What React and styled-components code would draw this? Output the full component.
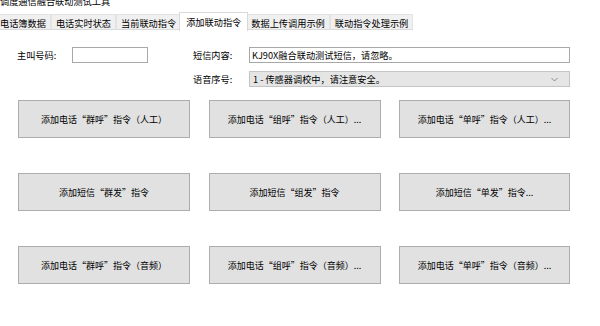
import React from 'react';
import styled, { createGlobalStyle } from 'styled-components';

const FONT = '"Noto Sans CJK SC", "Liberation Sans", sans-serif';

const GlobalStyle = createGlobalStyle`
  html, body {
    margin: 0;
    padding: 0;
    background: #fff;
  }
  body {
    font-family: ${FONT};
    color: #000;
  }
`;

const TABS = ['电话簿数据', '电话实时状态', '当前联动指令', '添加联动指令', '数据上传调用示例', '联动指令处理示例'];

const BUTTONS = [
  '添加电话“群呼”指令（人工）',
  '添加电话“组呼”指令（人工）...',
  '添加电话“单呼”指令（人工）...',
  '添加短信“群发”指令',
  '添加短信“组发”指令',
  '添加短信“单发”指令...',
  '添加电话“群呼”指令（音频）',
  '添加电话“组呼”指令（音频）...',
  '添加电话“单呼”指令（音频）...',
];

const Window = styled.div`
  width: 600px;
  height: 326px;
  overflow: hidden;
  background: #fff;
  font-size: 9.2px;
`;

const Title = styled.div`
  height: 10px;
  line-height: 10px;
  margin-top: -4px;
  padding-left: 0;
  white-space: nowrap;
`;

const TabBar = styled.div`
  display: flex;
  align-items: flex-start;
  width: 410px;
  height: 19px;
  margin-top: 6px;
`;

const Tab = styled.div`
  position: relative;
  height: ${p => (p.$active ? '19px' : '16px')};
  line-height: ${p => (p.$active ? '18px' : '16px')};
  margin-top: ${p => (p.$active ? '0' : '2px')};
  margin-left: ${p => (p.$active ? '-2px' : '0')};
  margin-right: ${p => (p.$active ? '-2px' : '0')};
  padding: ${p => (p.$active ? '0 6px' : '0 4px')};
  background: ${p => (p.$active ? '#fff' : '#f0f0f0')};
  border: 1px solid ${p => (p.$active ? '#d9d9d9' : '#e3e3e3')};
  border-bottom: ${p => (p.$active ? 'none' : '1px solid #d9d9d9')};
  box-sizing: border-box;
  white-space: nowrap;
  z-index: ${p => (p.$active ? 1 : 0)};

  &:first-child {
    padding-left: 0;
    border-left: none;
  }
`;

const Form = styled.div`
  display: flex;
  padding: 16px 0 0 17px;
`;

const Field = styled.div`
  display: flex;
  align-items: center;
  height: 16px;
  margin-bottom: 8px;
`;

const Label = styled.span`
  width: ${p => p.$w}px;
  white-space: nowrap;
`;

const LeftCol = styled.div`
  width: 176px;
`;

const RightCol = styled.div`
  display: flex;
  flex-direction: column;
`;

const TextBox = styled.div`
  width: ${p => p.$w}px;
  height: 16px;
  line-height: 14px;
  box-sizing: border-box;
  border: 1px solid #a8a8a8;
  background: #fff;
  padding-left: 2px;
  white-space: nowrap;
  overflow: hidden;
`;

const Select = styled.div`
  display: flex;
  align-items: center;
  justify-content: space-between;
  width: 321px;
  height: 16px;
  box-sizing: border-box;
  border: 1px solid #c4c4c4;
  background: #e5e5e5;
  padding: 0 11px 0 3px;
  white-space: nowrap;
`;

const ButtonGrid = styled.div`
  display: grid;
  grid-template-columns: 172px 172px 171px;
  grid-auto-rows: 38px;
  column-gap: 18.5px;
  row-gap: 35px;
  padding: 5px 0 0 18px;
`;

const CmdButton = styled.button`
  font-family: ${FONT};
  font-size: 9px;
  color: #000;
  background: #e1e1e1;
  border: 1px solid #adadad;
  border-radius: 0;
  padding: 0;
  white-space: nowrap;
`;

export default function App() {
  return (
    <Window>
      <GlobalStyle />
      <Title>调度通信融合联动测试工具</Title>
      <TabBar>
        {TABS.map(t => (
          <Tab key={t} $active={t === '添加联动指令'}>{t}</Tab>
        ))}
      </TabBar>
      <Form>
        <LeftCol>
          <Field>
            <Label $w={55}>主叫号码:</Label>
            <TextBox $w={76} />
          </Field>
        </LeftCol>
        <RightCol>
          <Field>
            <Label $w={56}>短信内容:</Label>
            <TextBox $w={321}>KJ90X融合联动测试短信，请忽略。</TextBox>
          </Field>
          <Field>
            <Label $w={56}>语音序号:</Label>
            <Select>
              <span>1 - 传感器调校中，请注意安全。</span>
              <svg width="7" height="5" viewBox="0 0 7 5">
                <path d="M0.5 1 L3.5 4 L6.5 1" fill="none" stroke="#8a8a8a" strokeWidth="1" />
              </svg>
            </Select>
          </Field>
        </RightCol>
      </Form>
      <ButtonGrid>
        {BUTTONS.map(b => (
          <CmdButton key={b}>{b}</CmdButton>
        ))}
      </ButtonGrid>
    </Window>
  );
}
